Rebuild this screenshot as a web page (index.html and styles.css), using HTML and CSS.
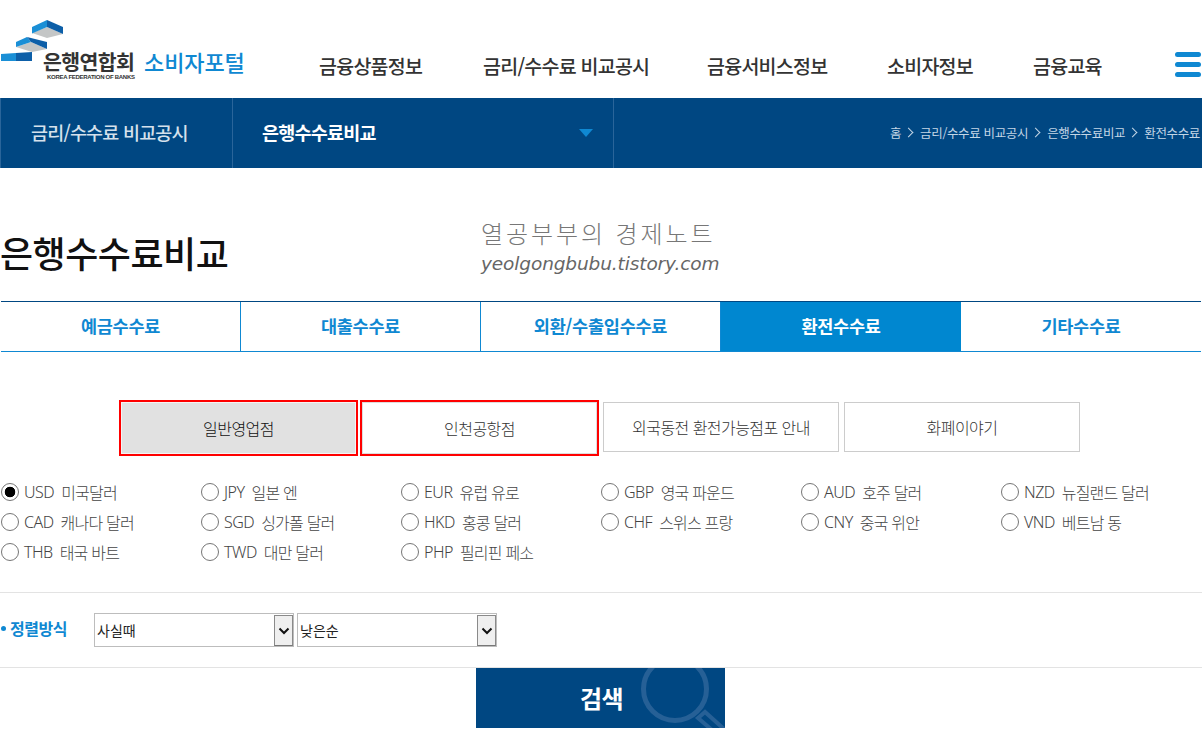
FILE: index.html
```html
<!DOCTYPE html>
<html lang="ko">
<head>
<meta charset="utf-8">
<title>은행수수료비교</title>
<link rel="stylesheet" href="styles.css">
</head>
<body>
<header class="top">
  <a class="logo">
    <svg class="logo-mark" width="64" height="42" viewBox="0 0 64 42">
      <path d="M32 13 47 7 63 14 47 18Z" fill="#c4c6c6"/>
      <path d="M32 7 47 0V7L32 13.500Z" fill="#1a8fd6"/>
      <path d="M47 0 63 7V14L47 7Z" fill="#0d5fa8"/>
      <path d="M16 27 31 22 47 29 32 32Z" fill="#c4c6c6"/>
      <path d="M16 22 27 17 31 22 16 27Z" fill="#1a8fd6"/>
      <path d="M27 17 47 22V29L31 22Z" fill="#0d5fa8"/>
      <path d="M1 34 16 33V41H1Z" fill="#1a8fd6"/>
      <path d="M16 33 32 32V41H16Z" fill="#0d5fa8"/>
    </svg>
    <span class="logo-name">
      <span class="logo-kr">은행연합회</span>
      <span class="logo-en">KOREA FEDERATION OF BANKS</span>
    </span>
    <span class="logo-portal">소비자포털</span>
  </a>
  <nav class="gnb">
    <a class="gnb-a">금융상품정보</a>
    <a class="gnb-b">금리/수수료 비교공시</a>
    <a class="gnb-c">금융서비스정보</a>
    <a class="gnb-d">소비자정보</a>
    <a class="gnb-e">금융교육</a>
  </nav>
  <div class="burger"><i></i><i></i><i></i></div>
</header>

<div class="subbar">
  <div class="sub-cat">금리/수수료 비교공시</div>
  <div class="sub-page"><span>은행수수료비교</span><i class="caret"></i></div>
  <div class="crumbs">
    <span>홈</span><i class="chev"></i><span>금리/수수료 비교공시</span><i class="chev"></i><span>은행수수료비교</span><i class="chev"></i><span>환전수수료</span>
  </div>
</div>

<main class="content">
  <div class="title-row">
    <h1>은행수수료비교</h1>
    <div class="watermark">
      <div class="wm-kr">열공부부의 경제노트</div>
      <div class="wm-en">yeolgongbubu.tistory.com</div>
    </div>
  </div>

  <ul class="tabs">
    <li>예금수수료</li>
    <li>대출수수료</li>
    <li>외환/수출입수수료</li>
    <li class="on">환전수수료</li>
    <li>기타수수료</li>
  </ul>

  <div class="subtabs">
    <a class="st mark sel">일반영업점</a>
    <a class="st mark">인천공항점</a>
    <a class="st">외국동전 환전가능점포 안내</a>
    <a class="st">화폐이야기</a>
  </div>

  <div class="radios">
    <label><input type="radio" name="c" checked><b>USD</b>미국달러</label>
    <label><input type="radio" name="c"><b>JPY</b>일본 엔</label>
    <label><input type="radio" name="c"><b>EUR</b>유럽 유로</label>
    <label><input type="radio" name="c"><b>GBP</b>영국 파운드</label>
    <label><input type="radio" name="c"><b>AUD</b>호주 달러</label>
    <label><input type="radio" name="c"><b>NZD</b>뉴질랜드 달러</label>
    <label><input type="radio" name="c"><b>CAD</b>캐나다 달러</label>
    <label><input type="radio" name="c"><b>SGD</b>싱가폴 달러</label>
    <label><input type="radio" name="c"><b>HKD</b>홍콩 달러</label>
    <label><input type="radio" name="c"><b>CHF</b>스위스 프랑</label>
    <label><input type="radio" name="c"><b>CNY</b>중국 위안</label>
    <label><input type="radio" name="c"><b>VND</b>베트남 동</label>
    <label><input type="radio" name="c"><b>THB</b>태국 바트</label>
    <label><input type="radio" name="c"><b>TWD</b>대만 달러</label>
    <label><input type="radio" name="c"><b>PHP</b>필리핀 페소</label>
  </div>

  <div class="sort">
    <span class="sort-label"><i class="dot"></i>정렬방식</span>
    <div class="fake-select"><span>사실때</span><i class="arrow"><svg width="12" height="8" viewBox="0 0 12 8"><path d="M1.5 1.500 6 6l4.500-4.500" fill="none" stroke="#111" stroke-width="2"/></svg></i></div>
    <div class="fake-select"><span>낮은순</span><i class="arrow"><svg width="12" height="8" viewBox="0 0 12 8"><path d="M1.5 1.500 6 6l4.500-4.500" fill="none" stroke="#111" stroke-width="2"/></svg></i></div>
  </div>

  <div class="search-row">
    <button class="search" type="button">검색
      <svg class="search-ico" width="100" height="60" viewBox="0 0 100 60">
        <circle cx="50" cy="21" r="31.500" fill="none" stroke="#266096" stroke-width="5"/>
        <path d="M73 50 80 44 100 62H87Z" fill="none" stroke="#266096" stroke-width="4"/>
      </svg>
    </button>
  </div>
</main>
</body>
</html>
```
FILE: styles.css
```css
* { box-sizing: border-box; }
html, body { margin: 0; padding: 0; }
body {
  width: 1202px;
  height: 736px;
  overflow: hidden;
  background: #fff;
  color: #333;
  font-family: "Noto Sans CJK KR", "Noto Sans", sans-serif;
}
.top {
  height: 98px;
  display: flex;
  position: relative;
}
.logo {
  width: 319px;
  flex: none;
  position: relative;
  display: flex;
  align-items: flex-start;
  padding-top: 20px;
}
.logo-mark { flex: none; }
.logo-name {
  display: flex;
  flex-direction: column;
  margin: 30px 0 0 -21px;
  width: 100px;
  color: #333;
}
.logo-kr {
  font-size: 20.5px;
  line-height: 22px;
  font-weight: 700;
  letter-spacing: -.6px;
  white-space: nowrap;
}
.logo-en {
  font-family: "Liberation Sans", sans-serif;
  font-size: 6px;
  line-height: 8px;
  font-weight: 700;
  white-space: nowrap;
  letter-spacing: -.28px;
  margin-left: 4px;
  margin-top: 1px;
}
.logo-portal {
  position: absolute;
  left: 144px;
  top: 47px;
  font-size: 22px;
  line-height: 28px;
  font-weight: 500;
  color: #0f88d2;
  white-space: nowrap;
  letter-spacing: -.1px;
}
.gnb {
  display: flex;
  padding-top: 51px;
  font-size: 19.5px;
  line-height: 30px;
  color: #333;
  font-weight: 500;
  letter-spacing: -.75px;
  white-space: nowrap;
}
.gnb-a { width: 164px; }
.gnb-b { width: 224px; }
.gnb-c { width: 180px; }
.gnb-d { width: 146px; }
.gnb-e { width: 100px; }
.burger {
  position: absolute;
  right: 1px;
  top: 52px;
  width: 26px;
  display: flex;
  flex-direction: column;
  gap: 5px;
}
.burger i {
  display: block;
  height: 5px;
  background: #0f88d2;
  border-radius: 3px;
}
.subbar {
  height: 70px;
  background: #004782;
  display: flex;
  align-items: stretch;
  color: #fff;
}
.sub-cat {
  width: 233px;
  padding-left: 30px;
  border-left: 1px solid #2a659a;
  border-right: 1px solid #2a659a;
  font-size: 18.5px;
  font-weight: 500;
  line-height: 68px;
  letter-spacing: -.8px;
  color: #d5e1ec;
}
.sub-page {
  width: 381px;
  padding: 0 20px 2px 29px;
  border-right: 1px solid #2a659a;
  display: flex;
  align-items: center;
  justify-content: space-between;
  font-size: 18.5px;
  font-weight: 700;
  letter-spacing: -.75px;
}
.caret {
  width: 0;
  height: 0;
  border-left: 7px solid transparent;
  border-right: 7px solid transparent;
  border-top: 8px solid #0f88d2;
  margin-top: 2px;
}
.crumbs {
  flex: 1;
  display: flex;
  align-items: center;
  justify-content: flex-end;
  padding: 0 2px 2px 0;
  font-size: 12.5px;
  color: #c4d6e6;
  letter-spacing: -.35px;
  white-space: nowrap;
}
.chev {
  width: 7px;
  height: 7px;
  border-top: 1px solid #c4d6e6;
  border-right: 1px solid #c4d6e6;
  transform: rotate(45deg);
  margin: 0 8px 0 4px;
}
.content { display: block; }
.title-row {
  height: 133px;
  position: relative;
}
h1 {
  margin: 0;
  padding: 57px 0 0 0;
  font-size: 36px;
  line-height: 54px;
  font-weight: 500;
  color: #111;
  letter-spacing: -.5px;
}
.watermark {
  position: absolute;
  left: 481px;
  top: 49px;
  color: #777;
}
.wm-kr {
  font-size: 24px;
  line-height: 32px;
  font-weight: 300;
  letter-spacing: 2.9px;
  white-space: nowrap;
}
.wm-en {
  font-family: "DejaVu Sans", sans-serif;
  font-size: 18.5px;
  line-height: 26px;
  font-style: oblique;
  letter-spacing: -.12px;
  margin-top: 2px;
  white-space: nowrap;
  color: #666;
}
.tabs {
  list-style: none;
  margin: 0 0 0 1px;
  padding: 0;
  width: 1200px;
  height: 51px;
  display: flex;
  border-top: 1px solid #004782;
  border-bottom: 1px solid #0f88d2;
}
.tabs li {
  width: 240px;
  line-height: 48px;
  text-align: center;
  font-size: 17.5px;
  font-weight: 700;
  color: #0f88d2;
  letter-spacing: -.25px;
  border-right: 1px solid #0f88d2;
}
.tabs li.on {
  background: #0087d0;
  color: #fff;
  border-right: 0;
}
.tabs li:last-child { border-right: 0; }
.subtabs {
  display: flex;
  padding: 48px 0 0 119px;
  align-items: flex-start;
}
.st {
  display: block;
  flex: none;
  width: 236px;
  height: 50px;
  margin: 2px 5px 0 0;
  border: 1px solid #ccc;
  text-align: center;
  font-size: 16px;
  font-weight: 300;
  line-height: 48px;
  color: #333;
  letter-spacing: -.55px;
  white-space: nowrap;
}
.st.mark {
  width: 239px;
  height: 56px;
  margin: 0 2px 0 0;
  border: 2px solid #f00;
  box-shadow: inset 0 0 0 1px #ddd;
  line-height: 52px;
}
.st.mark + .st.mark { margin-right: 4px; }
.st.sel {
  background: #e1e1e1;
  color: #111;
  box-shadow: inset 0 0 0 1px #f4f4f4;
}
.radios {
  display: grid;
  grid-template-columns: repeat(6, 200px);
  grid-auto-rows: 30px;
  padding-top: 21px;
  height: 137px;
  border-bottom: 1px solid #e3e3e3;
}
.radios label {
  display: flex;
  align-items: center;
  font-size: 16px;
  font-weight: 300;
  color: #444;
  letter-spacing: -.8px;
  white-space: nowrap;
}
.radios input {
  appearance: none;
  width: 18px;
  height: 18px;
  margin: 0 5px 0 1px;
  border: 1px solid #767676;
  border-radius: 50%;
  background: #fff;
  flex: none;
}
.radios input:checked {
  background: radial-gradient(circle, #000 0 5px, #fff 5.6px);
}
.radios b {
  font-weight: 300;
  margin-right: 7px;
  font-family: "Noto Sans", sans-serif;
  letter-spacing: -.5px;
}
.sort {
  height: 75px;
  display: flex;
  align-items: flex-start;
  padding-top: 20px;
  border-bottom: 1px solid #e3e3e3;
}
.sort-label {
  width: 94px;
  padding-top: 2px;
  display: flex;
  align-items: center;
  font-size: 16px;
  line-height: 26px;
  font-weight: 700;
  color: #0f88d2;
  letter-spacing: -.5px;
}
.dot {
  width: 5px;
  height: 5px;
  background: #0f88d2;
  border-radius: 50%;
  margin: 0 4px 0 1px;
}
.fake-select {
  width: 200px;
  height: 34px;
  border: 1px solid #bdbdbd;
  display: flex;
  font-size: 14px;
  line-height: 32px;
  color: #222;
  padding: 0 0 0 2px;
  margin-right: 3px;
}
.fake-select span { flex: 1; }
.arrow {
  width: 19px;
  margin: 1px 0 0;
  border: 1px solid #8a8a8a;
  border-bottom-color: #777;
  background: #efefef;
  display: flex;
  align-items: center;
  justify-content: center;
}
.search-row {
  display: flex;
  padding-left: 476px;
}
.search {
  width: 249px;
  height: 60px;
  border: 0;
  padding: 0 0 0 2px;
  background: #004782;
  color: #fff;
  font: 700 24px/60px "Noto Sans CJK KR", sans-serif;
  letter-spacing: -.5px;
  position: relative;
  overflow: hidden;
}
.search-ico {
  position: absolute;
  right: 0;
  top: 0;
}
```
